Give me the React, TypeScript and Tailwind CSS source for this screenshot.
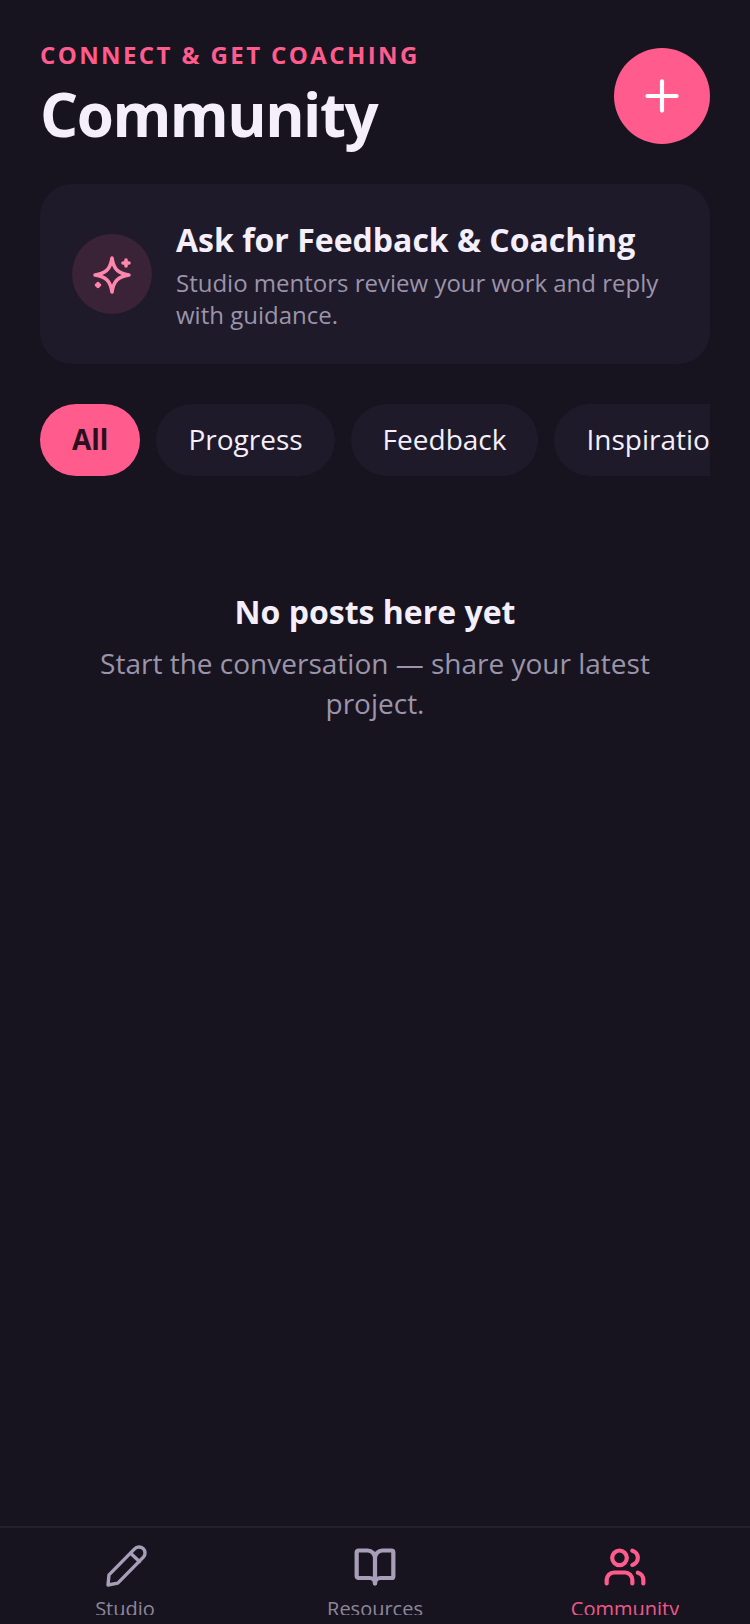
import { BookOpen, Plus, Users } from 'lucide-react'

const filters = ['All', 'Progress', 'Feedback', 'Inspiration', 'Questions']

function PencilIcon() {
  return (
    <svg width="44" height="44" viewBox="0 0 44 44" fill="none" stroke="currentColor" strokeWidth="3.4" strokeLinecap="round" strokeLinejoin="round">
      <path d="M5 40 L6 29.9 L31.6 3.9 A6 6 0 0 1 40.4 12.1 L14.8 38.1 Z" />
      <path d="M27.6 8.3 L36.4 16.5" />
    </svg>
  )
}

function BookIcon() {
  return <BookOpen size={44} strokeWidth={2.3} />
}

function UsersIcon() {
  return <Users size={44} strokeWidth={2.3} />
}

function SparkleIcon() {
  return (
    <svg width="48" height="48" viewBox="0 0 48 48" fill="none" stroke="currentColor" strokeWidth="3.6" strokeLinecap="round" strokeLinejoin="round" className="text-[#ff86ad]">
      <path d="M24 8 C25.5 19 30 23.5 41 25 C30 26.5 25.5 31 24 42 C22.5 31 18 26.5 7 25 C18 23.5 22.5 19 24 8 Z" />
      <path d="M38 10 V16 M35 13 H41" />
      <path d="M10 33.5 V36.5 M8.5 35 H11.5" />
    </svg>
  )
}

const tabs = [
  { label: 'Studio', icon: PencilIcon, active: false },
  { label: 'Resources', icon: BookIcon, active: false },
  { label: 'Community', icon: UsersIcon, active: true },
]

export default function App() {
  return (
    <div className="flex h-[1624px] flex-col overflow-hidden bg-[#171420] font-['Open_Sans',sans-serif]">
      <main className="flex-1 px-10 pt-10">
        <header className="flex items-start justify-between">
          <div>
            <p className="text-2xl leading-[30px] font-bold tracking-[2.4px] text-[#ff5c8d]">CONNECT &amp; GET COACHING</p>
            <h1 className="mt-2 text-[60px] leading-[72px] font-bold tracking-[-1.5px] text-[#f4effa]">Community</h1>
          </div>
          <button className="mt-2 flex h-24 w-24 items-center justify-center rounded-full bg-[#ff5c8d] text-white">
            <Plus size={50} strokeWidth={2} />
          </button>
        </header>

        <section className="mt-[34px] flex items-center gap-6 rounded-[32px] bg-[#1e1a2a] p-8">
          <div className="flex h-20 w-20 shrink-0 items-center justify-center rounded-full bg-[#3a2237]">
            <SparkleIcon />
          </div>
          <div>
            <h2 className="text-[32px] leading-[48px] font-bold text-[#f4effa]">Ask for Feedback &amp; Coaching</h2>
            <p className="mt-[3px] pb-px text-2xl leading-8 text-[#9b94aa]">Studio mentors review your work and reply with guidance.</p>
          </div>
        </section>

        <div className="mt-10 flex gap-4 overflow-hidden">
          {filters.map((filter, index) => (
            <button
              key={filter}
              className={
                index === 0
                  ? 'h-[72px] shrink-0 rounded-full bg-[#ff5c8d] px-8 pb-[2px] text-[28px] font-bold text-[#2a0f1e]'
                  : 'h-[72px] shrink-0 rounded-full bg-[#1e1a2a] px-8 pb-[2px] text-[28px] text-[#f4effa]'
              }
            >
              {filter}
            </button>
          ))}
        </div>

        <div className="mt-[116px] px-10 text-center">
          <h3 className="text-[32px] leading-10 font-bold text-[#f4effa]">No posts here yet</h3>
          <p className="mt-[11px] text-[28px] leading-10 text-[#9b94aa]">Start the conversation — share your latest project.</p>
        </div>
      </main>

      <nav className="flex h-[98px] border-t-2 border-[#241f30] pt-[17px]">
        {tabs.map(tab => (
          <div key={tab.label} className={`flex flex-1 flex-col items-center ${tab.active ? 'text-[#ff5c8d]' : 'text-[#a79fb8]'}`}>
            <tab.icon />
            <div className={`mt-px h-[25px] overflow-hidden text-[20px] leading-[38px] ${tab.active ? 'text-[#f0588a]' : 'text-[#8d8699]'}`}>{tab.label}</div>
          </div>
        ))}
      </nav>
    </div>
  )
}
